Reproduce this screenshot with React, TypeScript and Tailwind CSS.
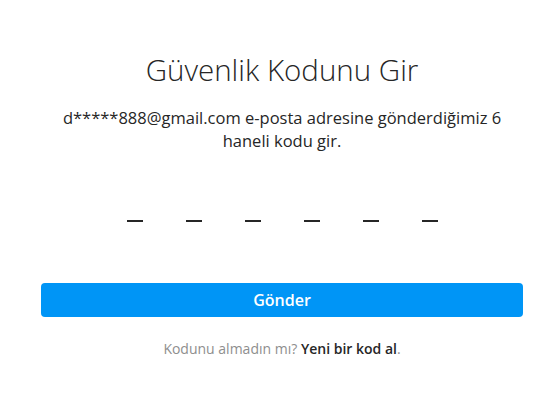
export default function App() {
  const slots = [0, 1, 2, 3, 4, 5];
  return (
    <div className="w-[551px] h-[399px] bg-white flex flex-col items-center text-[#262626]" style={{ fontFamily: '"Open Sans", "Noto Sans", sans-serif' }}>
      <div className="w-full pl-[41px] pr-[28px] flex flex-col items-center">
        <h1 className="mt-[50px] text-[29.5px] leading-[40px] font-light text-[#262626]">Güvenlik Kodunu Gir</h1>
        <p className="mt-[16px] w-[450px] text-center text-[16.5px] leading-[23px] text-[#262626]">
          d*****888@gmail.com e-posta adresine gönderdiğimiz 6 haneli kodu gir.
        </p>
        <div className="mt-[52px] flex gap-[43px]">
          {slots.map((i) => (
            <div key={i} className="w-[16px] h-[18px] flex items-end">
              <div className="w-[16px] h-[2px] bg-[#262626]" />
            </div>
          ))}
        </div>
        <button className="mt-[61px] w-full h-[34px] rounded-[4px] bg-[#0095f6] text-white text-[16px] font-semibold">
          Gönder
        </button>
        <p className="mt-[21px] text-[14px] text-[#8e8e8e]">
          Kodunu almadın mı? <span className="text-[#262626] font-semibold">Yeni bir kod al</span>.
        </p>
      </div>
    </div>
  );
}
